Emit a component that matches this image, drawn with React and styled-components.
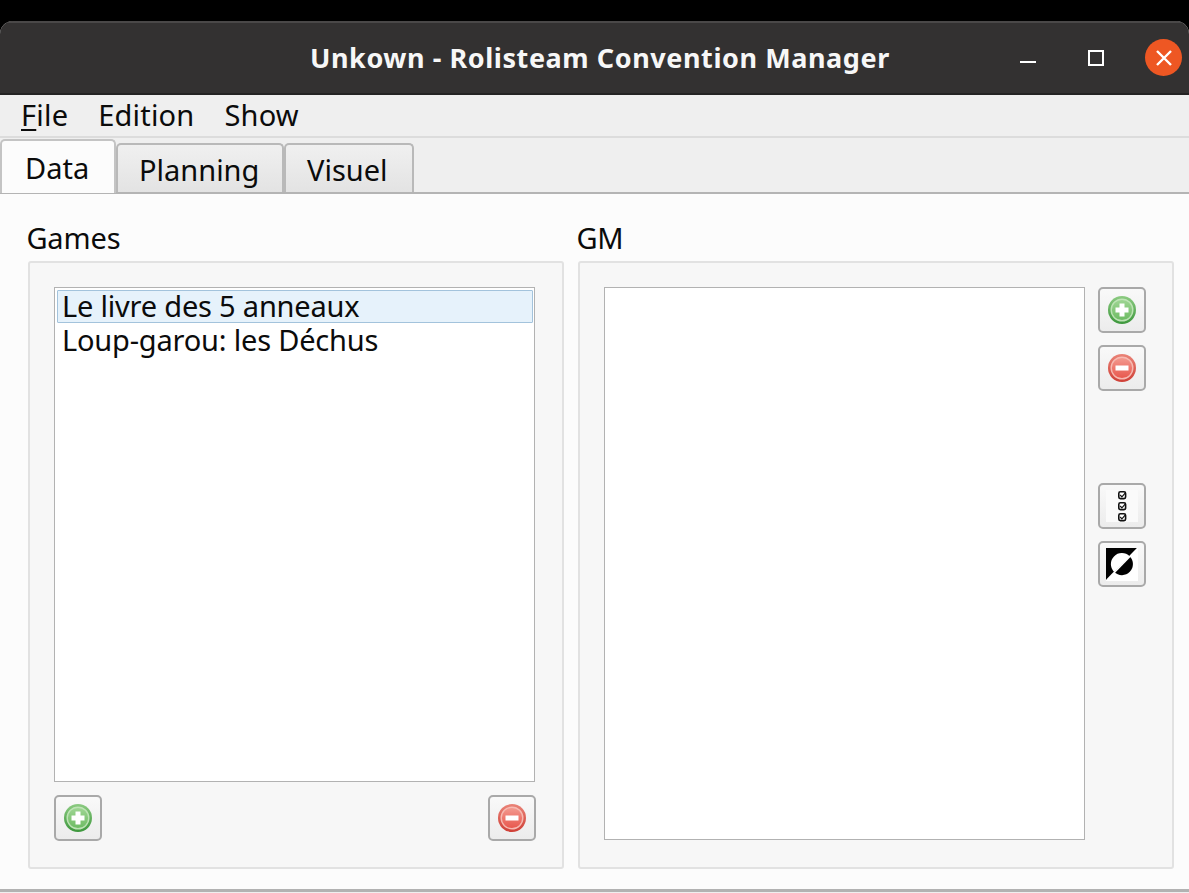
import React, { useId } from "react";
import styled, { createGlobalStyle } from "styled-components";

const Global = createGlobalStyle`
  html, body { margin: 0; padding: 0; background: #000; }
  * { box-sizing: border-box; }
`;

const Screen = styled.div`
  width: 1189px;
  height: 893px;
  padding-top: 21px;
  background: #000;
  overflow: hidden;
  font-family: "Noto Sans", "Open Sans", sans-serif;
  color: #0b0b0b;
`;

const Window = styled.div`
  height: 872px;
  display: flex;
  flex-direction: column;
  background: #efefef;
  border-radius: 13px 13px 0 0;
  overflow: hidden;
`;

const TitleBar = styled.header`
  height: 74px;
  flex: none;
  display: flex;
  align-items: center;
  padding: 0 7px 1px 310px;
  background: #333131;
  border-top: 2px solid #4a4848;
  border-bottom: 2px solid #242323;
`;

const Title = styled.h1`
  margin: 0;
  width: 600px;
  font-size: 27px;
  font-weight: 700;
  line-height: 36px;
  color: #f7f7f7;
  white-space: nowrap;
  letter-spacing: 0.57px;
`;

const WindowControls = styled.div`
  margin-left: auto;
  display: flex;
  align-items: center;
`;

const MinimizeGlyph = styled.span`
  display: block;
  width: 16px;
  height: 2px;
  margin: 8px 52px 0 0;
  background: #fff;
`;

const MaximizeGlyph = styled.span`
  display: block;
  width: 16px;
  height: 16px;
  margin-right: 41px;
  border: 2px solid #fff;
`;

const CloseButton = styled.span`
  width: 37px;
  height: 37px;
  border-radius: 50%;
  background: #ee5723;
  display: flex;
  align-items: center;
  justify-content: center;
`;

const MenuBar = styled.nav`
  height: 43px;
  flex: none;
  display: flex;
  align-items: center;
  padding: 0 0 1px 21px;
  gap: 30px;
  font-size: 29px;
  background: #efefef;
  border-bottom: 2px solid #dcdcdc;
`;

const MenuItem = styled.span`
  line-height: 38px;
  letter-spacing: 0.2px;
  u { text-underline-offset: 3px; text-decoration-thickness: 2px; }
`;

const TabBar = styled.div`
  height: 54px;
  flex: none;
  display: flex;
  align-items: flex-end;
  position: relative;
  z-index: 1;
`;

const Tab = styled.div`
  width: ${(p) => p.$w}px;
  height: ${(p) => (p.$active ? 54 : 49)}px;
  margin-bottom: ${(p) => (p.$active ? -1 : 0)}px;
  padding-left: ${(p) => p.$pad}px;
  font-size: 29px;
  line-height: ${(p) => (p.$active ? 54 : 49)}px;
  border: 2px solid #b9b9b9;
  border-bottom: none;
  border-radius: 5px 5px 0 0;
  background: ${(p) => (p.$active ? "#fcfcfc" : "linear-gradient(#f0f0f0, #e3e3e3)")};
  ${(p) => p.$active && "border-color: #c4c4c4;"}
`;

const Pane = styled.main`
  flex: 1;
  min-height: 0;
  display: grid;
  grid-template-columns: 536px 596px;
  column-gap: 14px;
  padding: 0 15px 0 28px;
  margin-bottom: 1px;
  background: #fcfcfc;
  border-top: 2px solid #b4b4b4;
  border-bottom: 3px solid #b2b2b2;
`;

const Section = styled.section`
  display: flex;
  flex-direction: column;
  height: 675px;
`;

const SectionLabel = styled.div`
  height: 67px;
  flex: none;
  margin-left: -1.6px;
  padding-top: 25px;
  font-size: 29px;
  line-height: 38px;
  letter-spacing: -0.15px;
`;

const GroupBox = styled.div`
  height: 608px;
  flex: none;
  background: #f7f7f7;
  border: 2px solid #e2e2e2;
  border-radius: 3px;
  display: ${(p) => (p.$row ? "flex" : "block")};
  padding: 24px 27px 0 24px;
  gap: 13px;
`;

const ListBox = styled.div`
  width: 481px;
  height: ${(p) => p.$h}px;
  flex: none;
  background: #fff;
  border: 1px solid #b2b2b2;
  padding: 2px;
  font-size: 29px;
`;

const ListItem = styled.div`
  height: ${(p) => (p.$selected ? 33 : 35)}px;
  padding-left: 5px;
  line-height: ${(p) => (p.$selected ? 30 : 34)}px;
  letter-spacing: -0.2px;
  white-space: nowrap;
  ${(p) =>
    p.$selected &&
    `background: #e6f2fb;
     border: 1px solid #a3c3dc;
     border-radius: 1px;
     margin-right: -1px;
     padding-left: 4px;`}
`;

const BottomRow = styled.div`
  display: flex;
  justify-content: space-between;
  margin-top: 13px;
  width: 482px;
`;

const SideColumn = styled.div`
  width: 48px;
  display: flex;
  flex-direction: column;
  gap: 12px;
`;

const SideSpacer = styled.div`
  height: 68px;
`;

const ToolButton = styled.button`
  width: 48px;
  height: 46px;
  padding: 0;
  display: flex;
  align-items: center;
  justify-content: center;
  background: linear-gradient(#f9f9f9, #ececec);
  border: 2px solid #a9a9a9;
  border-radius: 5px;
`;

function RoundIcon({ kind }) {
  const id = useId();
  const plus = kind === "plus";
  const [top, bottom, fillTop, fillBottom, ring] = plus
    ? ["#8ccb82", "#3c973c", "#a2d897", "#6fbd64", "#c3e6ba"]
    : ["#ea8478", "#cf3f36", "#f49e94", "#ea574c", "#f8bfb7"];
  return (
    <svg width="28" height="28" viewBox="0 0 28 28">
      <defs>
        <linearGradient id={`${id}o`} x1="0" y1="0" x2="0" y2="1">
          <stop offset="0" stopColor={top} />
          <stop offset="1" stopColor={bottom} />
        </linearGradient>
        <linearGradient id={`${id}i`} x1="0" y1="0" x2="0" y2="1">
          <stop offset="0" stopColor={fillTop} />
          <stop offset="1" stopColor={fillBottom} />
        </linearGradient>
      </defs>
      <circle cx="14" cy="14" r="14" fill={`url(#${id}o)`} />
      <circle cx="14" cy="14" r="10.8" fill={`url(#${id}i)`} stroke={ring} strokeWidth="1.4" opacity="0.95" />
      {plus ? (
        <path d="M11.5 7.5h5v4h4v5h-4v4h-5v-4h-4v-5h4z" fill="#fff" />
      ) : (
        <rect x="7.5" y="11.5" width="13" height="5" fill="#fff" />
      )}
    </svg>
  );
}

function ChecklistIcon() {
  const ys = [1, 12, 23];
  return (
    <svg width="32" height="32" viewBox="0 0 32 32">
      <rect width="32" height="32" fill="#fafafa" />
      {ys.map((y) => (
        <g key={y} transform={`translate(12 ${y})`}>
          <rect x="0.8" y="0.8" width="6.8" height="6.8" rx="1.6" fill="#fff" stroke="#111" strokeWidth="1.6" />
          <path d="M2.2 4 L3.9 5.8 L7.6 1.6" fill="none" stroke="#111" strokeWidth="1.2" />
        </g>
      ))}
    </svg>
  );
}

function MoonIcon() {
  return (
    <svg width="32" height="33" viewBox="0 0 32 33">
      <rect width="32" height="33" fill="#fff" />
      <path d="M0 0H32L0 33z" fill="#000" />
      <path d="M23.6 8.2A11 11 0 0 0 8.2 24z" fill="#fff" />
      <path d="M8.2 24A11 11 0 0 0 23.6 8.2z" fill="#000" />
      <path d="M32 0L0 33" stroke="#fff" strokeWidth="1.6" />
    </svg>
  );
}

export default function App() {
  return (
    <Screen>
      <Global />
      <Window>
        <TitleBar>
          <Title>Unkown - Rolisteam Convention Manager</Title>
          <WindowControls>
            <MinimizeGlyph />
            <MaximizeGlyph />
            <CloseButton>
              <svg width="20" height="20" viewBox="0 0 20 20">
                <path d="M3 3L17 17M17 3L3 17" stroke="#fff" strokeWidth="2.4" />
              </svg>
            </CloseButton>
          </WindowControls>
        </TitleBar>
        <MenuBar>
          <MenuItem><u>F</u>ile</MenuItem>
          <MenuItem>Edition</MenuItem>
          <MenuItem>Show</MenuItem>
        </MenuBar>
        <TabBar>
          <Tab $active $w={116} $pad={23}>Data</Tab>
          <Tab $w={168} $pad={21}>Planning</Tab>
          <Tab $w={130} $pad={21}>Visuel</Tab>
        </TabBar>
        <Pane>
          <Section>
            <SectionLabel>Games</SectionLabel>
            <GroupBox>
              <ListBox $h={495}>
                <ListItem $selected>Le livre des 5 anneaux</ListItem>
                <ListItem>Loup-garou: les Déchus</ListItem>
              </ListBox>
              <BottomRow>
                <ToolButton><RoundIcon kind="plus" /></ToolButton>
                <ToolButton><RoundIcon kind="minus" /></ToolButton>
              </BottomRow>
            </GroupBox>
          </Section>
          <Section>
            <SectionLabel>GM</SectionLabel>
            <GroupBox $row>
              <ListBox $h={553} />
              <SideColumn>
                <ToolButton><RoundIcon kind="plus" /></ToolButton>
                <ToolButton><RoundIcon kind="minus" /></ToolButton>
                <SideSpacer />
                <ToolButton><ChecklistIcon /></ToolButton>
                <ToolButton><MoonIcon /></ToolButton>
              </SideColumn>
            </GroupBox>
          </Section>
        </Pane>
      </Window>
    </Screen>
  );
}
